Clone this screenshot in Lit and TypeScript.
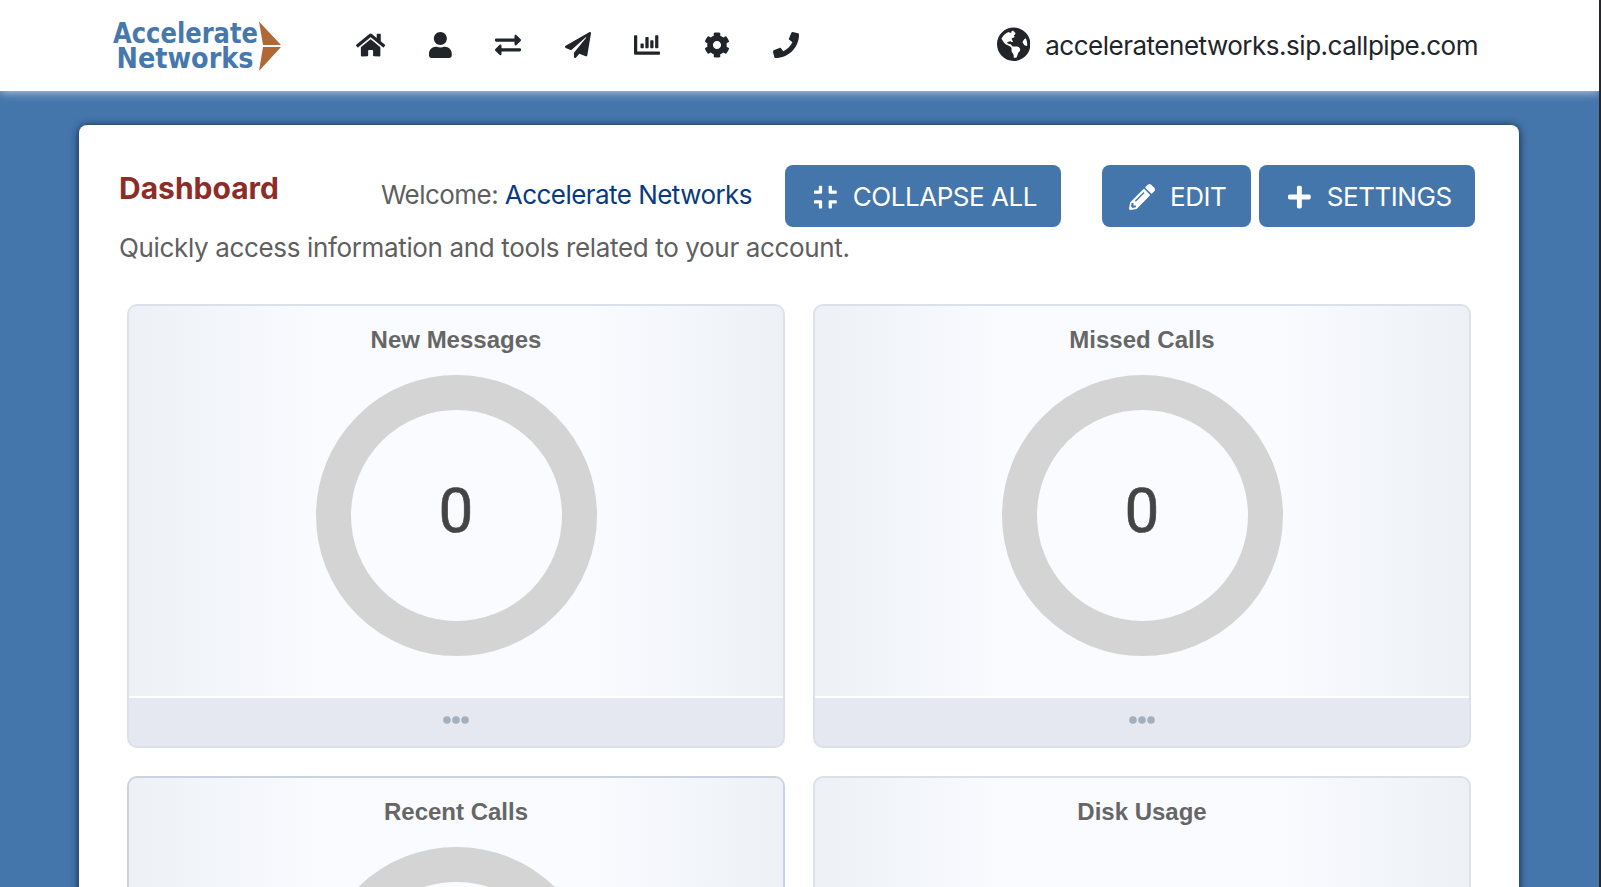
import { LitElement, html, svg, css } from "lit";
import { customElement, property } from "lit/decorators.js";

type Glyph = { w: number; d: string };

const ICONS: Record<string, Glyph> = {
  home: { w: 576, d: "M280.37 148.26L96 300.11V464a16 16 0 0 0 16 16l112.06-.29a16 16 0 0 0 15.92-16V368a16 16 0 0 1 16-16h64a16 16 0 0 1 16 16v95.64a16 16 0 0 0 16 16.05L464 480a16 16 0 0 0 16-16V300L295.67 148.26a12.19 12.19 0 0 0-15.3 0zM571.6 251.47L488 182.56V44.05a12 12 0 0 0-12-12h-56a12 12 0 0 0-12 12v72.61L318.47 43a48 48 0 0 0-61 0L4.34 251.47a12 12 0 0 0-1.6 16.9l25.5 31A12 12 0 0 0 45.15 301l235.22-193.74a12.19 12.19 0 0 1 15.3 0L530.9 301a12 12 0 0 0 16.9-1.6l25.5-31a12 12 0 0 0-1.7-16.93z" },
  user: { w: 448, d: "M224 256c70.7 0 128-57.3 128-128S294.7 0 224 0 96 57.3 96 128s57.3 128 128 128zm89.6 32h-16.7c-22.2 10.2-46.9 16-72.9 16s-50.6-5.8-72.9-16h-16.7C60.2 288 0 348.2 0 422.4V464c0 26.5 21.5 48 48 48h352c26.5 0 48-21.5 48-48v-41.6c0-74.2-60.2-134.4-134.4-134.4z" },
  exchange: { w: 512, d: "M0 168v-16c0-13.255 10.745-24 24-24h360V80c0-21.367 25.899-32.042 40.971-16.971l80 80c9.372 9.373 9.372 24.569 0 33.941l-80 80C409.956 271.982 384 261.456 384 240v-48H24c-13.255 0-24-10.745-24-24zm488 152H128v-48c0-21.314-25.862-32.08-40.971-16.971l-80 80c-9.372 9.373-9.372 24.569 0 33.941l80 80C102.057 463.997 128 453.437 128 432v-48h360c13.255 0 24-10.745 24-24v-16c0-13.255-10.745-24-24-24z" },
  plane: { w: 512, d: "M476 3.2L12.5 270.6c-18.1 10.4-15.8 35.6 2.2 43.2L121 358.4l287.3-253.2c5.5-4.9 13.3 2.6 8.6 8.3L176 407v80.5c0 23.6 28.5 32.9 42.5 15.8L282 426l124.6 52.2c14.2 6 30.4-2.9 33-18.2l72-432C515 7.8 493.3-6.8 476 3.2z" },
  chart: { w: 512, d: "M332.8 320h38.4c6.4 0 12.8-6.4 12.8-12.8V172.8c0-6.4-6.4-12.8-12.8-12.8h-38.4c-6.4 0-12.8 6.4-12.8 12.8v134.4c0 6.4 6.4 12.8 12.8 12.8zm96 0h38.4c6.4 0 12.8-6.4 12.8-12.8V76.8c0-6.4-6.4-12.8-12.8-12.8h-38.4c-6.4 0-12.8 6.4-12.8 12.8v230.4c0 6.4 6.4 12.8 12.8 12.8zm-288 0h38.4c6.4 0 12.8-6.4 12.8-12.8v-70.4c0-6.4-6.4-12.8-12.8-12.8h-38.4c-6.4 0-12.8 6.4-12.8 12.8v70.4c0 6.4 6.4 12.8 12.8 12.8zm96 0h38.4c6.4 0 12.8-6.4 12.8-12.8V108.8c0-6.4-6.4-12.8-12.8-12.8h-38.4c-6.4 0-12.8 6.4-12.8 12.8v198.4c0 6.4 6.4 12.8 12.8 12.8zM496 384H64V80c0-8.84-7.16-16-16-16H16C7.16 64 0 71.16 0 80v336c0 17.67 14.33 32 32 32h464c8.84 0 16-7.16 16-16v-32c0-8.84-7.16-16-16-16z" },
  cog: { w: 512, d: "M487.4 315.7l-42.6-24.6c4.3-23.2 4.3-47 0-70.2l42.6-24.6c4.9-2.8 7.1-8.6 5.5-14-11.1-35.6-30-67.8-54.7-94.6-3.8-4.1-10-5.1-14.8-2.3L380.8 110c-17.9-15.4-38.5-27.3-60.8-35.1V25.8c0-5.6-3.9-10.5-9.4-11.7-36.7-8.2-74.3-7.8-109.2 0-5.5 1.2-9.4 6.1-9.4 11.7V75c-22.2 7.9-42.8 19.8-60.8 35.1L88.7 85.5c-4.9-2.8-11-1.9-14.8 2.3-24.7 26.7-43.6 58.9-54.7 94.6-1.7 5.4.6 11.2 5.5 14L67.3 221c-4.3 23.2-4.3 47 0 70.2l-42.6 24.6c-4.9 2.8-7.1 8.6-5.5 14 11.1 35.6 30 67.8 54.7 94.6 3.8 4.1 10 5.1 14.8 2.3l42.6-24.6c17.9 15.4 38.5 27.3 60.8 35.1v49.2c0 5.6 3.9 10.5 9.4 11.7 36.7 8.2 74.3 7.8 109.2 0 5.5-1.2 9.4-6.1 9.4-11.7v-49.2c22.2-7.9 42.8-19.8 60.8-35.1l42.6 24.6c4.9 2.8 11 1.9 14.8-2.3 24.7-26.7 43.6-58.9 54.7-94.6 1.5-5.5-.7-11.3-5.6-14.1zM256 336c-44.1 0-80-35.9-80-80s35.9-80 80-80 80 35.9 80 80-35.9 80-80 80z" },
  phone: { w: 512, d: "M493.4 24.6l-104-24c-11.3-2.6-22.9 3.3-27.5 13.9l-48 112c-4.2 9.8-1.4 21.3 6.9 28l60.6 49.6c-36 76.7-98.9 140.5-177.2 177.2l-49.6-60.6c-6.8-8.3-18.2-11.1-28-6.9l-112 48C3.9 366.5-2 378.1.6 389.4l24 104C27.1 504.2 36.7 512 48 512c256.1 0 464-207.5 464-464 0-11.2-7.7-20.9-18.6-23.4z" },
  globe: { w: 496, d: "M248 8C111.03 8 0 119.03 0 256s111.03 248 248 248 248-111.03 248-248S384.97 8 248 8zm82.29 357.6c-3.9 3.88-7.99 7.95-11.31 11.28-2.99 3-5.1 6.7-6.17 10.71-1.51 5.66-2.73 11.38-4.77 16.87l-17.39 46.85c-13.76 3-28 4.69-42.65 4.69v-27.38c1.69-12.62-7.64-36.26-22.63-51.25-6-6-9.37-14.14-9.37-22.63v-32.01c0-11.64-6.27-22.34-16.46-27.97-14.37-7.95-34.81-19.06-48.81-26.11-11.48-5.78-22.1-13.14-31.65-21.75l-.8-.72a114.792 114.792 0 0 1-18.06-20.74c-9.38-13.77-24.66-36.42-34.59-51.14 20.47-45.5 57.36-82.04 103.2-101.89l24.01 12.01C203.48 89.74 216 82.01 216 70.11v-11.3c7.99-1.29 16.12-2.11 24.39-2.42l28.3 28.3c6.25 6.25 6.25 16.38 0 22.63L264 112l-10.34 10.34c-3.12 3.12-3.12 8.19 0 11.31l4.69 4.69c3.12 3.12 3.12 8.19 0 11.31l-8 8a8.008 8.008 0 0 1-5.66 2.34h-8.99c-2.08 0-4.08.81-5.58 2.27l-9.92 9.65a8.008 8.008 0 0 0-1.58 9.31l15.59 31.19c2.66 5.32-1.21 11.58-7.15 11.58h-5.64c-1.93 0-3.79-.7-5.24-1.96l-9.28-8.06a16.017 16.017 0 0 0-15.55-3.1l-31.17 10.39a11.95 11.95 0 0 0-8.17 11.34c0 4.53 2.56 8.66 6.61 10.69l11.08 5.54c9.41 4.71 19.79 7.16 30.31 7.16s22.59 27.29 32 32h66.75c8.49 0 16.62 3.37 22.63 9.37l13.69 13.69a30.503 30.503 0 0 1 8.93 21.57 46.536 46.536 0 0 1-13.72 32.98zM417 274.25c-5.79-1.45-10.84-5-14.15-9.97l-17.98-26.97a23.97 23.97 0 0 1 0-26.62l19.59-29.38c2.32-3.47 5.5-6.29 9.24-8.15l12.98-6.49C440.2 193.59 448 223.87 448 256c0 8.67-.74 17.16-1.82 25.54L417 274.25z" },
  compress: { w: 448, d: "M436 192H312c-13.3 0-24-10.7-24-24V44c0-6.6 5.4-12 12-12h40c6.6 0 12 5.4 12 12v84h84c6.6 0 12 5.4 12 12v40c0 6.6-5.4 12-12 12zm-276-24V44c0-6.6-5.4-12-12-12h-40c-6.6 0-12 5.4-12 12v84H12c-6.6 0-12 5.4-12 12v40c0 6.6 5.4 12 12 12h124c13.3 0 24-10.7 24-24zm0 300V344c0-13.3-10.7-24-24-24H12c-6.6 0-12 5.4-12 12v40c0 6.6 5.4 12 12 12h84v84c0 6.6 5.4 12 12 12h40c6.6 0 12-5.4 12-12zm192 0v-84h84c6.6 0 12-5.4 12-12v-40c0-6.6-5.4-12-12-12H312c-13.3 0-24 10.7-24 24v124c0 6.6 5.4 12 12 12h40c6.6 0 12-5.4 12-12z" },
  pencil: { w: 512, d: "M497.9 142.1l-46.1 46.1c-4.7 4.7-12.3 4.7-17 0l-111-111c-4.7-4.7-4.7-12.3 0-17l46.1-46.1c18.7-18.7 49.1-18.7 67.9 0l60.1 60.1c18.8 18.7 18.8 49.1 0 67.9zM284.2 99.8L21.6 362.4.4 483.9c-2.9 16.4 11.4 30.6 27.8 27.8l121.5-21.3 262.6-262.6c4.7-4.7 4.7-12.3 0-17l-111-111c-4.8-4.7-12.4-4.7-17.1 0zM124.1 339.9c-5.5-5.5-5.5-14.3 0-19.8l154-154c5.5-5.5 14.3-5.5 19.8 0s5.5 14.3 0 19.8l-154 154c-5.5 5.5-14.3 5.5-19.8 0zM88 424h48v36.3l-64.5 11.3-31.1-31.1L51.7 376H88v48z" },
  plus: { w: 448, d: "M416 208H272V64c0-17.67-14.33-32-32-32h-32c-17.67 0-32 14.33-32 32v144H32c-17.67 0-32 14.33-32 32v32c0 17.67 14.33 32 32 32h144v144c0 17.67 14.33 32 32 32h32c17.67 0 32-14.33 32-32V304h144c17.67 0 32-14.33 32-32v-32c0-17.67-14.33-32-32-32z" },
};

const icon = (name: string, size = 26) => {
  const g = ICONS[name];
  return html`<svg class="icon" width=${(g.w / 512) * size} height=${size} viewBox="0 0 ${g.w} 512">${svg`<path fill="currentColor" d=${g.d}></path>`}</svg>`;
};

@customElement("dash-card")
export class DashCard extends LitElement {
  @property() label = "";
  @property() value = "";
  @property({ type: Boolean }) ring = false;
  @property({ type: Boolean, reflect: true }) active = false;

  static styles = css`
    :host {
      display: flex;
      flex-direction: column;
      box-sizing: border-box;
      height: 444px;
      border: 2px solid #dbe0ea;
      border-radius: 10px;
      overflow: hidden;
      background: #e5e8f1;
    }
    :host([active]) { border-color: #cbd3e1; }
    .body {
      flex: none;
      height: 392px;
      box-sizing: border-box;
      display: flex;
      flex-direction: column;
      align-items: center;
      border-bottom: 2px solid #fff;
      background: linear-gradient(to right, #edf1f6 0%, #f9fbff 30%, #f9fbff 70%, #edf1f6 100%);
    }
    .title {
      margin-top: 20px;
      font: bold 24px/28px "Liberation Sans", Arial, sans-serif;
      font-kerning: none;
      color: #666;
    }
    .ring {
      margin-top: 20.5px;
      box-sizing: border-box;
      width: 281px;
      height: 281px;
      border: 35px solid #d4d4d4;
      border-radius: 50%;
      display: flex;
      align-items: center;
      justify-content: center;
    }
    .value {
      font: 400 62px/72px Roboto, sans-serif;
      color: #444;
      padding-bottom: 8px;
      -webkit-text-stroke: 0.6px #444;
    }
    .foot {
      flex: 1;
      display: flex;
      justify-content: center;
      padding-top: 17.5px;
    }
    .dots { display: block; width: 26px; height: 8px; }
  `;

  render() {
    return html`
      <div class="body">
        <div class="title">${this.label}</div>
        ${this.ring ? html`<div class="ring">${this.value ? html`<span class="value">${this.value}</span>` : ""}</div>` : ""}
      </div>
      <div class="foot">
        <svg class="dots" viewBox="0 0 26 8" fill="#a4aebd">
          <circle cx="4" cy="4" r="3.8"></circle>
          <circle cx="13" cy="4" r="3.8"></circle>
          <circle cx="22" cy="4" r="3.8"></circle>
        </svg>
      </div>
    `;
  }
}

@customElement("app-root")
export class AppRoot extends LitElement {
  static styles = css`
    :host {
      display: block;
      box-sizing: border-box;
      width: 1601px;
      height: 887px;
      overflow: hidden;
      border-right: 2px solid #24282d;
      background: #4476ac;
      font-family: Inter, sans-serif;
    }
    .icon { display: block; flex: none; }
    .header {
      display: flex;
      align-items: center;
      box-sizing: border-box;
      height: 91px;
      padding: 0 121px 0 113px;
      background: #fff;
      color: #212529;
      box-shadow: 0 0 10px rgba(255, 255, 255, 0.8);
    }
    .logo { display: block; width: 170px; height: 56px; overflow: visible; }
    .word {
      font-family: "DejaVu Sans Condensed", "DejaVu Sans", sans-serif;
      font-stretch: condensed;
      font-weight: 700;
      font-size: 29px;
      fill: #4678ae;
    }
    .nav {
      display: flex;
      align-items: center;
      gap: 43.5px;
      margin-left: 73px;
      padding-bottom: 2px;
    }
    .domain {
      display: flex;
      align-items: center;
      gap: 15px;
      margin-left: auto;
      font-size: 26px;
      line-height: 34px;
    }
    .host { letter-spacing: -0.49px; padding-top: 1px; }
    .domain .icon { margin-bottom: 2px; }
    .panel {
      box-sizing: border-box;
      width: 1440px;
      height: 1000px;
      margin: 34px 0 0 79px;
      padding: 40px 44px 0 40px;
      border-radius: 8px;
      background: #fff;
      box-shadow: 0 1px 8px #0b1f38;
    }
    .bar { display: flex; align-items: flex-start; height: 62px; }
    h1 {
      margin: 5px 0 0;
      font-size: 30px;
      line-height: 36px;
      font-weight: 700;
      color: #8e2c28;
    }
    .welcome {
      margin: 13px 33px 0 auto;
      font-size: 26px;
      line-height: 34px;
      letter-spacing: -0.55px;
      color: #5f5f5f;
    }
    .who { color: #083a80; }
    .btn {
      display: flex;
      align-items: center;
      box-sizing: border-box;
      height: 62px;
      padding: 1px 0 0 29px;
      border-radius: 8px;
      background: #4476ac;
      color: #fff;
      font-size: 26px;
      letter-spacing: -0.46px;
      gap: 16px;
      white-space: nowrap;
    }
    .collapse { width: 276px; margin-right: 41px; }
    .edit { width: 149px; margin-right: 8px; padding-left: 27px; gap: 15px; }
    .settings { width: 216px; }
    .lead {
      margin: 3px 0 0;
      font-size: 26px;
      line-height: 36px;
      letter-spacing: -0.35px;
      color: #5f5f5f;
    }
    .grid {
      display: grid;
      grid-template-columns: 658px 658px;
      gap: 28px;
      margin: 38px 0 0 8px;
    }
  `;

  render() {
    return html`
      <header class="header">
        <svg class="logo" viewBox="0 0 170 56">
          <text class="word" x="0" y="24.5" textLength="145" lengthAdjust="spacingAndGlyphs">Accelerate</text>
          <text class="word" x="3.5" y="49.5" textLength="137" lengthAdjust="spacingAndGlyphs">Networks</text>
          <path fill="#b06837" d="M146 3.5L168 27H150zM150 29H168L146 53z"></path>
        </svg>
        <nav class="nav">
          ${["home", "user", "exchange", "plane", "chart", "cog", "phone"].map((n) => icon(n))}
        </nav>
        <div class="domain">${icon("globe", 34.5)}<span class="host">acceleratenetworks.sip.callpipe.com</span></div>
      </header>
      <main class="panel">
        <div class="bar">
          <h1>Dashboard</h1>
          <div class="welcome">Welcome: <span class="who">Accelerate Networks</span></div>
          <div class="btn collapse">${icon("compress")}<span>COLLAPSE ALL</span></div>
          <div class="btn edit">${icon("pencil")}<span>EDIT</span></div>
          <div class="btn settings">${icon("plus")}<span>SETTINGS</span></div>
        </div>
        <p class="lead">Quickly access information and tools related to your account.</p>
        <div class="grid">
          <dash-card label="New Messages" value="0" ring></dash-card>
          <dash-card label="Missed Calls" value="0" ring></dash-card>
          <dash-card label="Recent Calls" ring active></dash-card>
          <dash-card label="Disk Usage"></dash-card>
        </div>
      </main>
    `;
  }
}
